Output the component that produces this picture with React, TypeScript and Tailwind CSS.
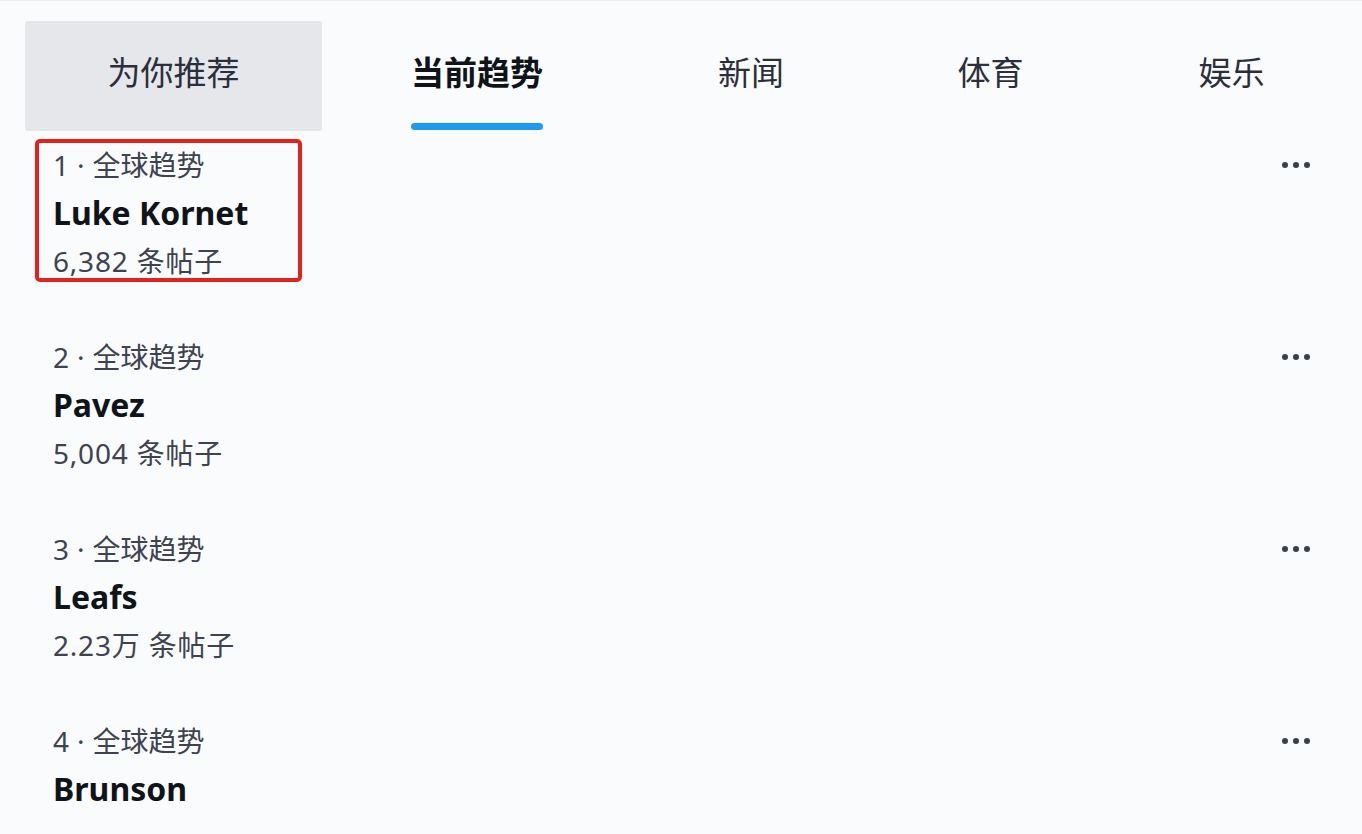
import { useState } from "react";

type Trend = {
  rank: number;
  name: string;
  posts?: string;
};

const tabs = ["为你推荐", "当前趋势", "新闻", "体育", "娱乐"];
const tabWidths = ["w-[297px]", "w-[310px]", "w-[238px]", "w-[241px]", "w-[241px]"];

const trends: Trend[] = [
  { rank: 1, name: "Luke Kornet", posts: "6,382 条帖子" },
  { rank: 2, name: "Pavez", posts: "5,004 条帖子" },
  { rank: 3, name: "Leafs", posts: "2.23万 条帖子" },
  { rank: 4, name: "Brunson" },
];

const font = {
  fontFamily: '"Noto Sans", "Noto Sans CJK SC", sans-serif',
};

const MoreDots = () => (
  <div className="flex h-[48px] items-center gap-[5px]">
    <span className="h-[6px] w-[6px] rounded-full bg-[#3a3f4a]" />
    <span className="h-[6px] w-[6px] rounded-full bg-[#3a3f4a]" />
    <span className="h-[6px] w-[6px] rounded-full bg-[#3a3f4a]" />
  </div>
);

export default function App() {
  const [active, setActive] = useState(1);

  return (
    <div
      className="h-[834px] w-[1362px] overflow-hidden border-t border-[#eceef2] bg-[#fafbfd] text-[#0f1419]"
      style={font}
    >
      <nav className="flex pl-[25px] pt-[20px]">
        {tabs.map((tab, i) => (
          <button
            key={tab}
            onClick={() => setActive(i)}
            className={`relative flex h-[110px] shrink-0 items-center justify-center pb-[6px] text-[33px] ${tabWidths[i]} ${
              i === 0 ? "rounded-[2px] bg-[#e5e7eb]" : ""
            } ${i === active ? "font-bold text-[#0f1419]" : "text-[#2a2f3b]"}`}
          >
            {tab}
            {i === active && (
              <span className="absolute bottom-[1px] left-1/2 h-[7px] w-[132px] -translate-x-1/2 rounded-full bg-[#1d9bf0]" />
            )}
          </button>
        ))}
      </nav>

      <ul>
        {trends.map((t) => (
          <li
            key={t.rank}
            className="flex h-[192px] items-start justify-between pl-[53px] pr-[52px] pt-[10px]"
          >
            <div className="relative">
              {t.rank === 1 && (
                <div className="absolute -left-[18px] -top-[2px] h-[143px] w-[267px] rounded-[5px] border-[4px] border-[#e5211c]" />
              )}
              <p className="flex h-[48px] items-center text-[28px] leading-[48px] text-[#3d4350]">
                {t.rank}
                <span className="mx-[8px]">·</span>
                全球趋势
              </p>
              <p className="h-[48px] text-[32px] font-bold leading-[48px] text-[#0f1419]">
                {t.name}
              </p>
              {t.posts && (
                <p className="h-[48px] text-[28px] leading-[48px] tracking-[0.8px] text-[#3d4350]">
                  {t.posts}
                </p>
              )}
            </div>
            <MoreDots />
          </li>
        ))}
      </ul>
    </div>
  );
}
